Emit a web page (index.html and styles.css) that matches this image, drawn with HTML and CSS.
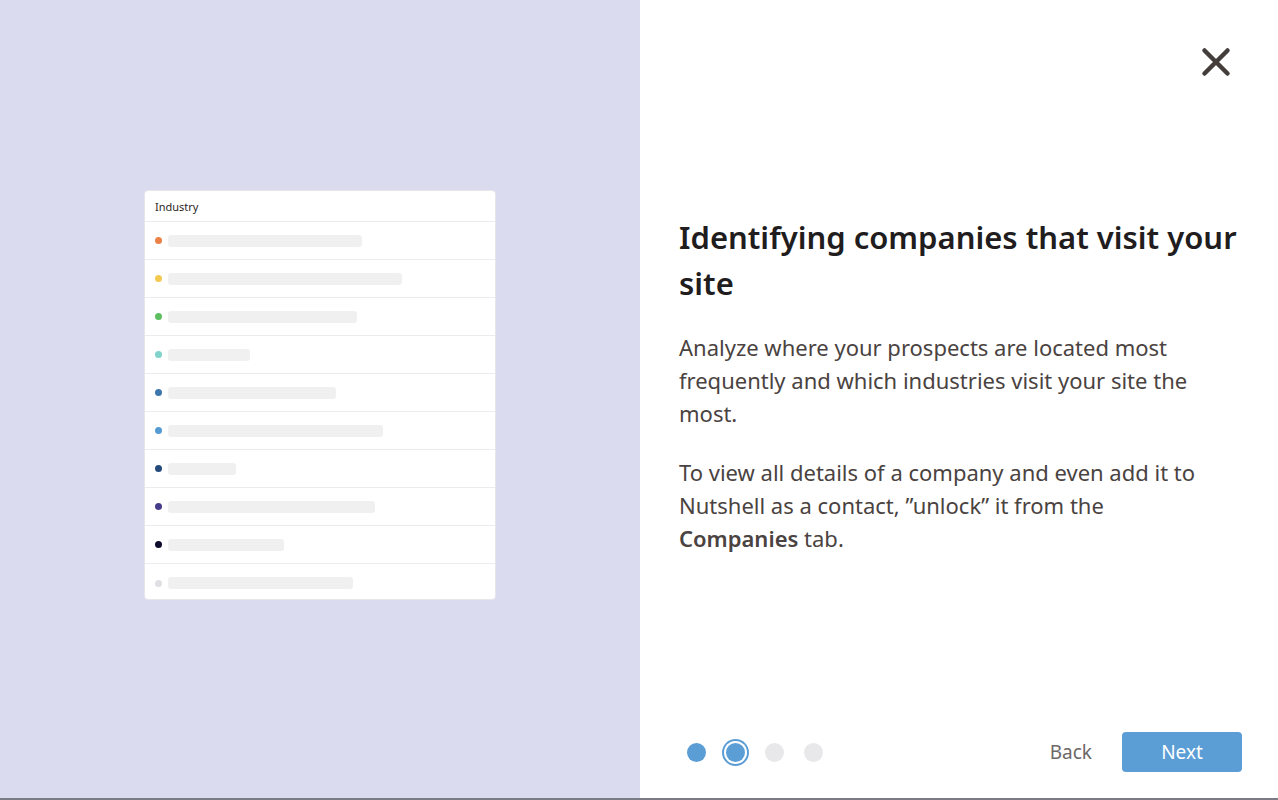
FILE: index.html
```html
<!DOCTYPE html>
<html lang="en">
<head>
  <meta charset="UTF-8">
  <title>Identifying companies</title>
  <link rel="stylesheet" href="styles.css">
</head>
<body>
  <div class="modal">
    <div class="preview">
      <div class="card">
        <div class="card-head">Industry</div>
        <div class="row"><span class="dot" style="background:#ec8145"></span><span class="bar" style="width:194px"></span></div>
        <div class="row"><span class="dot" style="background:#f3c94f"></span><span class="bar" style="width:234px"></span></div>
        <div class="row"><span class="dot" style="background:#5cbf5f"></span><span class="bar" style="width:189px"></span></div>
        <div class="row"><span class="dot" style="background:#7fd3cb"></span><span class="bar" style="width:82px"></span></div>
        <div class="row"><span class="dot" style="background:#3d77ac"></span><span class="bar" style="width:168px"></span></div>
        <div class="row"><span class="dot" style="background:#549bd4"></span><span class="bar" style="width:215px"></span></div>
        <div class="row"><span class="dot" style="background:#244a7c"></span><span class="bar" style="width:68px"></span></div>
        <div class="row"><span class="dot" style="background:#463c8c"></span><span class="bar" style="width:207px"></span></div>
        <div class="row"><span class="dot" style="background:#0e0c2c"></span><span class="bar" style="width:116px"></span></div>
        <div class="row"><span class="dot" style="background:#dfe0e3"></span><span class="bar" style="width:185px"></span></div>
      </div>
    </div>
    <div class="content">
      <button class="close" aria-label="Close">
        <svg width="30" height="30" viewBox="0 0 30 30"><path d="M3.5 3.5 L26.5 26.5 M26.5 3.5 L3.5 26.5" stroke="#433d3b" stroke-width="4.5" stroke-linecap="round"/></svg>
      </button>
      <div class="text">
        <h1>Identifying companies that visit your site</h1>
        <p>Analyze where your prospects are located most frequently and which industries visit your site the most.</p>
        <p>To view all details of a company and even add it to Nutshell as a contact, ”unlock” it from the <strong>Companies</strong> tab.</p>
      </div>
      <div class="footer">
        <div class="steps">
          <span class="step done"></span>
          <span class="step current"></span>
          <span class="step"></span>
          <span class="step"></span>
        </div>
        <div class="actions">
          <button class="back">Back</button>
          <button class="next">Next</button>
        </div>
      </div>
    </div>
  </div>
</body>
</html>
```

FILE: styles.css
```css
* {
  box-sizing: border-box;
}
html, body {
  margin: 0;
  height: 100%;
}
body {
  font-family: 'Noto Sans', 'Open Sans', sans-serif;
  background: #ffffff;
}
.modal {
  display: flex;
  height: 800px;
  border-bottom: 2px solid #7b7b86;
}
.preview {
  width: 640px;
  flex-shrink: 0;
  background: #dadbee;
  display: flex;
  justify-content: center;
  padding-top: 190px;
}
.card {
  width: 352px;
  height: 410px;
  background: #ffffff;
  border: 1px solid #e6e6ea;
  border-radius: 4px;
}
.card-head {
  height: 31px;
  padding: 8px 10px 0;
  font-size: 11px;
  color: #2b2626;
  border-bottom: 1px solid #ececee;
}
.row {
  height: 38px;
  display: flex;
  align-items: center;
  padding-left: 10px;
  border-bottom: 1px solid #ececee;
}
.row:last-child {
  border-bottom: none;
}
.dot {
  width: 7px;
  height: 7px;
  border-radius: 50%;
  margin-right: 6px;
}
.bar {
  height: 12px;
  border-radius: 3px;
  background: #f0f0f0;
}
.content {
  flex: 1;
  position: relative;
  display: flex;
  flex-direction: column;
  padding: 0 36px 0 39px;
}
.close {
  position: absolute;
  top: 47px;
  right: 47px;
  background: none;
  border: none;
  padding: 0;
  cursor: pointer;
}
.text {
  padding-top: 214px;
  flex: 1;
}
h1 {
  margin: 0 0 25px;
  font-size: 31px;
  line-height: 46px;
  font-weight: 600;
  color: #211c1d;
}
p {
  max-width: 532px;
  margin: 0 0 26px;
  font-size: 22px;
  line-height: 33px;
  color: #4a4341;
}
p strong {
  font-weight: 600;
}
.footer {
  display: flex;
  align-items: center;
  justify-content: space-between;
  height: 40px;
  margin-bottom: 26px;
}
.steps {
  display: flex;
  align-items: center;
  gap: 20px;
  margin-left: 8px;
}
.step {
  width: 19px;
  height: 19px;
  border-radius: 50%;
  background: #e8e8ea;
}
.step.done,
.step.current {
  background: #5b9dd5;
}
.step.current {
  box-shadow: 0 0 0 2px #ffffff, 0 0 0 4px #5b9dd5;
}
.actions {
  display: flex;
  align-items: center;
  gap: 30px;
}
.actions button {
  font-family: inherit;
  font-size: 19px;
  border: none;
  cursor: pointer;
}
.back {
  background: none;
  color: #6d6867;
  padding: 0;
}
.next {
  width: 120px;
  height: 40px;
  background: #5b9dd5;
  color: #ffffff;
  border-radius: 4px;
}
```
